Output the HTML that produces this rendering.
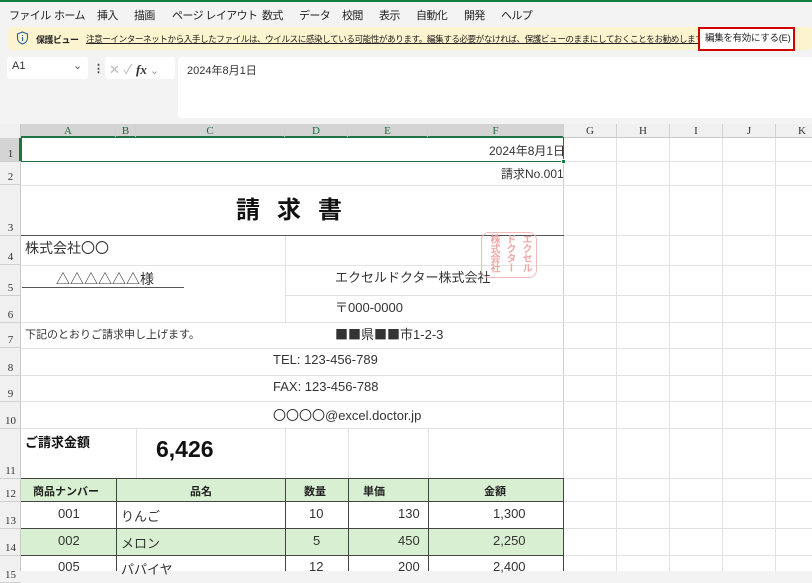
<!DOCTYPE html>
<html><head><meta charset="utf-8"><style>
*{margin:0;padding:0;box-sizing:border-box}
body{width:812px;height:571px;overflow:hidden;background:#f3f3f3;font-family:"Liberation Sans","Noto Sans CJK JP",sans-serif;position:relative;color:#222}
.a{position:absolute;white-space:nowrap}
.menu span{position:absolute;top:0;letter-spacing:-0.6px}
.hl{position:absolute;height:1px;background:#e2e2e2}
.vl{position:absolute;width:1px;background:#e2e2e2}
.ch{position:absolute;top:124px;height:14px;font-family:"Liberation Serif",serif;font-size:11px;text-align:center;line-height:14px;color:#333;border-right:1px solid #d0d0d0}
.rh{position:absolute;left:0;width:21px;font-family:"Liberation Serif",serif;font-size:11px;text-align:center;color:#333;border-bottom:1px solid #d0d0d0}
.t{position:absolute;font-size:13px;color:#333;white-space:nowrap}
.g{background:#d9efd2}
.sq{font-family:"Noto Sans CJK JP",sans-serif}
</style></head><body>
<div class="a" style="left:0;top:0;width:812px;height:2px;background:#107c41"></div>
<div class="a menu" style="left:9px;top:7px;font-size:11px;color:#222">
<span style="left:0">ファイル</span><span style="left:45px">ホーム</span><span style="left:88px">挿入</span><span style="left:125px">描画</span><span style="left:163px">ページ レイアウト</span><span style="left:253px">数式</span><span style="left:290px">データ</span><span style="left:333px">校閲</span><span style="left:370px">表示</span><span style="left:407px">自動化</span><span style="left:455px">開発</span><span style="left:492px">ヘルプ</span></div>
<div class="a" style="left:8px;top:27px;width:804px;height:23px;background:#fcf3cf;border-radius:4px"></div>
<svg class="a" style="left:16px;top:31px" width="13" height="14" viewBox="0 0 13 14"><path d="M6.5 1L11.5 3v4c0 3-2.2 5-5 6-2.8-1-5-3-5-6V3z" fill="none" stroke="#2a5fa8" stroke-width="1.1"/><rect x="6" y="6" width="1.1" height="4" fill="#2a5fa8"/><rect x="6" y="4" width="1.1" height="1.1" fill="#2a5fa8"/></svg>
<div class="a" style="left:36px;top:33px;font-size:9px;font-weight:bold;color:#222;letter-spacing:-0.5px">保護ビュー</div>
<div class="a" style="left:86px;top:33px;font-size:8.6px;color:#222;text-decoration:underline;letter-spacing:-0.45px">注意ーインターネットから入手したファイルは、ウイルスに感染している可能性があります。編集する必要がなければ、保護ビューのままにしておくことをお勧めします。</div>
<div class="a" style="left:698px;top:27px;width:97px;height:24px;border:2px solid #d40000;background:#fff;font-size:9.5px;line-height:20px;padding-left:5px;color:#222;letter-spacing:-0.3px">編集を有効にする(E)</div>
<div class="a" style="left:7px;top:57px;width:81px;height:22px;background:#fff;border-radius:3px;font-size:11px;padding:3px 0 0 5px;color:#333">A1<span style="position:absolute;left:66px;top:2px;color:#555">⌄</span></div>
<div class="a" style="left:93px;top:62px;font-size:11px;color:#444;font-weight:bold">⋮</div>
<div class="a" style="left:105px;top:57px;width:70px;height:22px;background:#fff;border-radius:3px;font-size:13px;color:#bbb;padding:2px 0 0 4px">✕ ✓ <i style="font-family:'Liberation Serif',serif;color:#333;font-weight:bold">fx</i><span style="color:#999;font-size:11px"> ⌄</span></div>
<div class="a" style="left:178px;top:57px;width:634px;height:61px;background:#fff;border-radius:4px 0 0 4px;font-size:11px;padding:5px 0 0 9px;color:#333">2024年8月1日</div>
<div class="a" style="left:0;top:124px;width:812px;height:447px;background:#fff"></div>
<div class="a" style="left:0;top:124px;width:812px;height:14px;background:#f0f0f0;border-bottom:1px solid #c8c8c8"></div>
<div class="a" style="left:0;top:124px;width:21px;height:447px;background:#f0f0f0;border-right:1px solid #c8c8c8"></div>
<div class="a" style="left:21px;top:124px;width:543px;height:14px;background:#d4d4d4;border-bottom:2px solid #217346"></div>
<div class="a" style="left:0;top:138px;width:21px;height:24px;background:#d4d4d4;border-right:2px solid #217346"></div>
<div class="ch" style="left:21px;width:95px;color:#1d6b3e">A</div>
<div class="ch" style="left:116px;width:20px;color:#1d6b3e">B</div>
<div class="ch" style="left:136px;width:149px;color:#1d6b3e">C</div>
<div class="ch" style="left:285px;width:63px;color:#1d6b3e">D</div>
<div class="ch" style="left:348px;width:80px;color:#1d6b3e">E</div>
<div class="ch" style="left:428px;width:136px;color:#1d6b3e">F</div>
<div class="ch" style="left:564px;width:53px">G</div>
<div class="ch" style="left:617px;width:53px">H</div>
<div class="ch" style="left:670px;width:53px">I</div>
<div class="ch" style="left:723px;width:53px">J</div>
<div class="ch" style="left:776px;width:53px">K</div>
<div class="rh" style="top:138px;height:24px;padding-top:10px">1</div>
<div class="rh" style="top:162px;height:23px;padding-top:9px">2</div>
<div class="rh" style="top:185px;height:51px;padding-top:37px">3</div>
<div class="rh" style="top:236px;height:29px;padding-top:15px">4</div>
<div class="rh" style="top:265px;height:31px;padding-top:17px">5</div>
<div class="rh" style="top:296px;height:27px;padding-top:13px">6</div>
<div class="rh" style="top:323px;height:25px;padding-top:11px">7</div>
<div class="rh" style="top:348px;height:28px;padding-top:14px">8</div>
<div class="rh" style="top:376px;height:26px;padding-top:12px">9</div>
<div class="rh" style="top:402px;height:27px;padding-top:13px">10</div>
<div class="rh" style="top:429px;height:50px;padding-top:36px">11</div>
<div class="rh" style="top:479px;height:23px;padding-top:9px">12</div>
<div class="rh" style="top:502px;height:27px;padding-top:13px">13</div>
<div class="rh" style="top:529px;height:27px;padding-top:13px">14</div>
<div class="rh" style="top:556px;height:27px;padding-top:13px">15</div>
<div class="vl" style="left:616px;top:138px;height:433px"></div>
<div class="vl" style="left:669px;top:138px;height:433px"></div>
<div class="vl" style="left:722px;top:138px;height:433px"></div>
<div class="vl" style="left:775px;top:138px;height:433px"></div>
<div class="vl" style="left:563px;top:138px;height:433px;background:#d0d0d0"></div>
<div class="hl" style="left:21px;top:185px;width:791px"></div>
<div class="hl" style="left:21px;top:161px;width:791px"></div>
<div class="hl" style="left:564px;top:235px;width:248px"></div>
<div class="hl" style="left:21px;top:265px;width:791px"></div>
<div class="hl" style="left:285px;top:295px;width:527px"></div>
<div class="hl" style="left:21px;top:322px;width:791px"></div>
<div class="hl" style="left:21px;top:348px;width:791px"></div>
<div class="hl" style="left:21px;top:375px;width:791px"></div>
<div class="hl" style="left:21px;top:401px;width:791px"></div>
<div class="hl" style="left:21px;top:428px;width:791px"></div>
<div class="hl" style="left:564px;top:478px;width:248px"></div>
<div class="hl" style="left:564px;top:501px;width:248px"></div>
<div class="hl" style="left:564px;top:528px;width:248px"></div>
<div class="hl" style="left:564px;top:555px;width:248px"></div>
<div class="vl" style="left:285px;top:236px;height:87px"></div>
<div class="vl" style="left:136px;top:429px;height:50px"></div>
<div class="vl" style="left:285px;top:429px;height:50px"></div>
<div class="vl" style="left:348px;top:429px;height:50px"></div>
<div class="vl" style="left:428px;top:429px;height:50px"></div>
<div class="a" style="left:21px;top:137px;width:543px;height:25px;border:1px solid #217346"></div>
<div class="a" style="left:561px;top:159px;width:5px;height:5px;background:#217346;border:1px solid #fff"></div>
<div class="t" style="left:489px;top:142px;font-size:12px">2024年8月1日</div>
<div class="t" style="left:501px;top:165px;font-size:12px">請求No.001</div>
<div class="t" style="left:236px;top:190px;font-size:24px;font-weight:bold;color:#111;letter-spacing:17px">請求書</div>
<div class="a" style="left:21px;top:235px;width:543px;height:1px;background:#555"></div>
<div class="t" style="left:25px;top:238px;font-size:14px">株式会社〇〇</div>
<div class="t" style="left:56px;top:269px;font-size:14px">△△△△△△様</div>
<div class="a" style="left:22px;top:287px;width:162px;height:1px;background:#555"></div>
<div class="t" style="left:335px;top:267px">エクセルドクター株式会社</div>
<div class="t" style="left:335px;top:297px">〒000-0000</div>
<div class="t" style="left:335px;top:324px"><span class="sq">■■</span>県<span class="sq">■■</span>市1-2-3</div>
<div class="t" style="left:25px;top:326px;font-size:11px">下記のとおりご請求申し上げます。</div>
<div class="t" style="left:273px;top:352px">TEL: 123-456-789</div>
<div class="t" style="left:273px;top:379px">FAX: 123-456-788</div>
<div class="t" style="left:273px;top:405px">〇〇〇〇@excel.doctor.jp</div>
<div class="a" style="left:481px;top:232px;width:56px;height:46px;border:1.5px solid #f3b8b8;border-radius:8px"></div>
<div class="a" style="left:485px;top:234px;writing-mode:vertical-rl;font-size:10px;line-height:16px;color:#f0a8a8;font-weight:bold;letter-spacing:-0.5px">エクセル<br>ドクター<br>株式会社</div>
<div class="t" style="left:25px;top:432px;font-size:13px;font-weight:bold;color:#111">ご請求金額</div>
<div class="t" style="left:156px;top:436px;font-size:23px;font-weight:bold;color:#111">6,426</div>
<div class="a g" style="left:21px;top:479px;width:543px;height:23px"></div>
<div class="a g" style="left:21px;top:529px;width:543px;height:27px"></div>
<div class="a" style="left:21px;top:478px;width:543px;height:1px;background:#444"></div>
<div class="a" style="left:21px;top:501px;width:543px;height:1px;background:#444"></div>
<div class="a" style="left:21px;top:528px;width:543px;height:1px;background:#444"></div>
<div class="a" style="left:21px;top:555px;width:543px;height:1px;background:#444"></div>
<div class="a" style="left:116px;top:478px;width:1px;height:93px;background:#444"></div>
<div class="a" style="left:285px;top:478px;width:1px;height:93px;background:#444"></div>
<div class="a" style="left:348px;top:478px;width:1px;height:93px;background:#444"></div>
<div class="a" style="left:428px;top:478px;width:1px;height:93px;background:#444"></div>
<div class="a" style="left:563px;top:478px;width:1px;height:93px;background:#444"></div>
<div class="t" style="left:33px;top:483px;font-size:11px;font-weight:bold;color:#222">商品ナンバー</div>
<div class="t" style="left:190px;top:483px;font-size:11px;font-weight:bold;color:#222">品名</div>
<div class="t" style="left:304px;top:483px;font-size:11px;font-weight:bold;color:#222">数量</div>
<div class="t" style="left:363px;top:483px;font-size:11px;font-weight:bold;color:#222">単価</div>
<div class="t" style="left:484px;top:483px;font-size:11px;font-weight:bold;color:#222">金額</div>
<div class="t" style="left:58px;top:506px">001</div><div class="t" style="left:121px;top:506px">りんご</div><div class="t" style="left:309px;top:506px">10</div><div class="t" style="left:398px;top:506px">130</div><div class="t" style="left:493px;top:506px">1,300</div>
<div class="t" style="left:58px;top:533px">002</div><div class="t" style="left:121px;top:533px">メロン</div><div class="t" style="left:313px;top:533px">5</div><div class="t" style="left:398px;top:533px">450</div><div class="t" style="left:493px;top:533px">2,250</div>
<div class="t" style="left:58px;top:559px">005</div><div class="t" style="left:121px;top:559px">パパイヤ</div><div class="t" style="left:309px;top:559px">12</div><div class="t" style="left:398px;top:559px">200</div><div class="t" style="left:493px;top:559px">2,400</div>
</body></html>
